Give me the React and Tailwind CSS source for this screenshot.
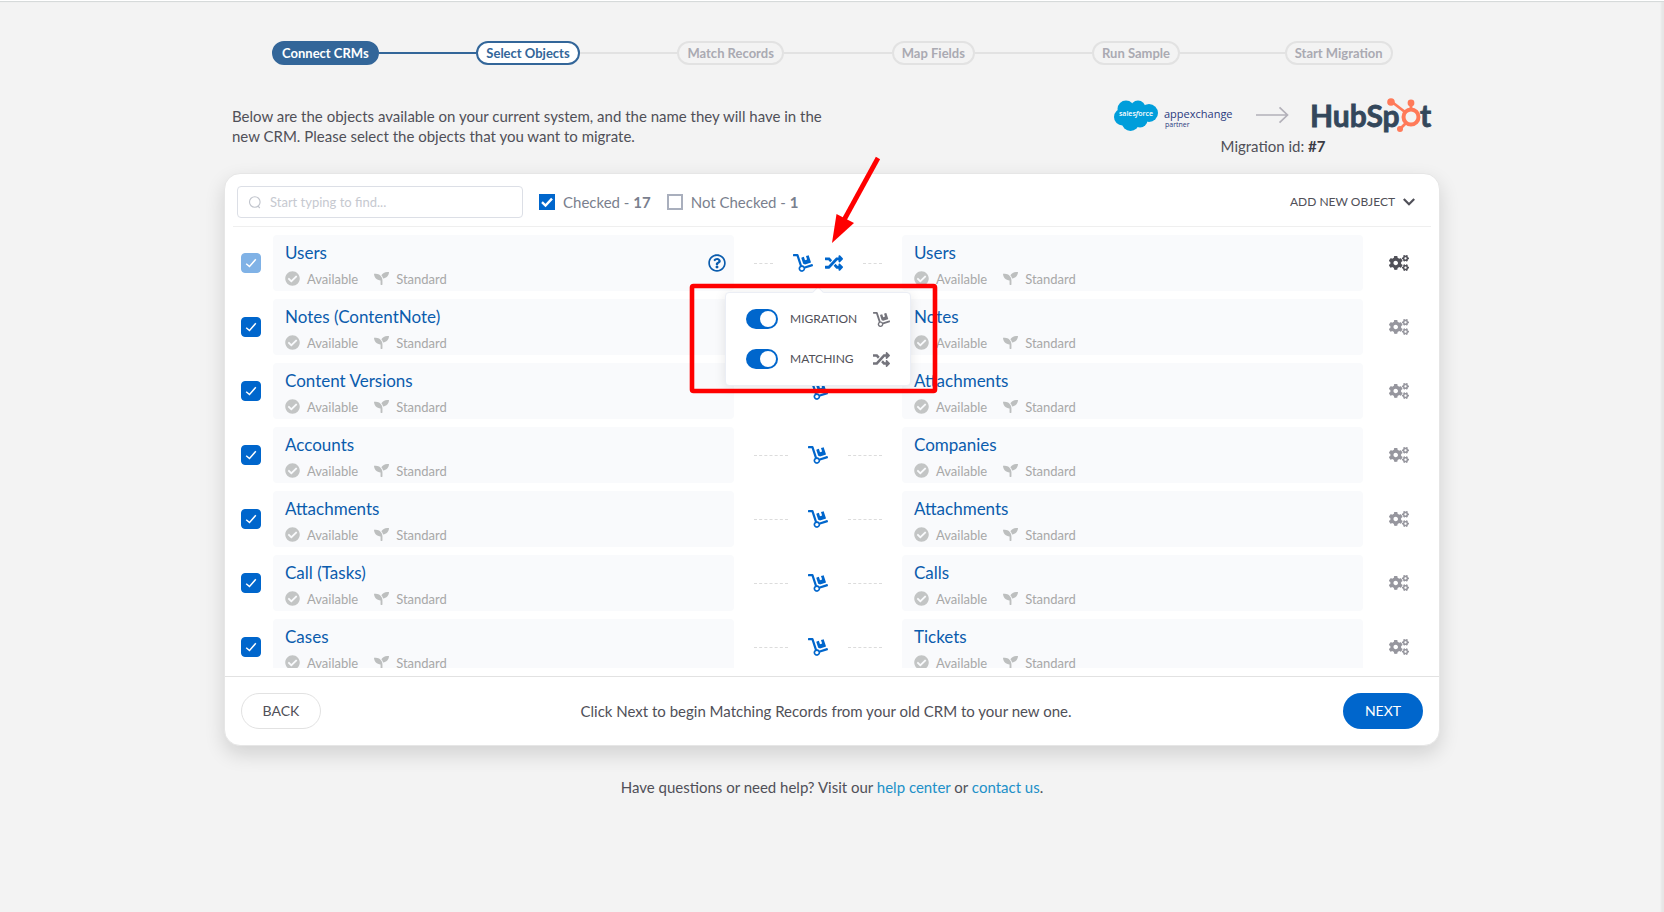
import { useState } from "react";
import {
  FaRandom,
  FaSeedling,
  FaCheckCircle,
  FaCogs,
  FaRegQuestionCircle,
  FaDolly,
} from "react-icons/fa";

const STEPS = [
  { label: "Connect CRMs", state: "done" },
  { label: "Select Objects", state: "current" },
  { label: "Match Records", state: "todo" },
  { label: "Map Fields", state: "todo" },
  { label: "Run Sample", state: "todo" },
  { label: "Start Migration", state: "todo" },
];

const PILL = {
  done: "border-[#336699] bg-[#336699] text-white",
  current: "border-[#336699] bg-white text-[#336699]",
  todo: "border-[#e2e2e2] bg-[#f3f3f3] text-[#aaaab2]",
};

const ROWS = [
  { source: "Users", target: "Users", locked: true, help: true, matching: true },
  { source: "Notes (ContentNote)", target: "Notes" },
  { source: "Content Versions", target: "Attachments" },
  { source: "Accounts", target: "Companies" },
  { source: "Attachments", target: "Attachments" },
  { source: "Call (Tasks)", target: "Calls" },
  { source: "Cases", target: "Tickets" },
];

function Stepper() {
  return (
    <ol className="grid grid-cols-6">
      {STEPS.map((step, i) => (
        <li key={step.label} className="flex items-center">
          <span
            className={`h-0.5 flex-1 ${
              i === 0 ? "bg-transparent" : i === 1 ? "bg-[#336699]" : "bg-[#e2e2e2]"
            }`}
          />
          <span
            className={`flex h-6 items-center rounded-full border-2 px-2 text-[13px] leading-5 font-bold ${PILL[step.state]}`}
          >
            {step.label}
          </span>
          <span
            className={`h-0.5 flex-1 ${
              i === STEPS.length - 1
                ? "bg-transparent"
                : i === 0
                  ? "bg-[#336699]"
                  : "bg-[#e2e2e2]"
            }`}
          />
        </li>
      ))}
    </ol>
  );
}

function SalesforceLogo() {
  return (
    <svg width="120" height="36" viewBox="0 0 120 36" role="img" aria-label="Salesforce AppExchange partner">
      <g fill="#009edb">
        <circle cx="12" cy="12" r="8.5" />
        <circle cx="24" cy="11" r="7.5" />
        <circle cx="35" cy="16" r="9" />
        <circle cx="8.5" cy="20" r="8.5" />
        <circle cx="16.5" cy="25.5" r="8.5" />
        <circle cx="26" cy="23" r="7.5" />
        <rect x="8" y="11" width="28" height="13" />
      </g>
      <text x="22" y="19" textAnchor="middle" fontFamily="Open Sans, sans-serif" fontSize="7" fontWeight="600" fill="#fff">
        sales<tspan fontStyle="italic">f</tspan>orce
      </text>
      <text x="50" y="21" fontFamily="Open Sans, sans-serif" fontSize="11" fontWeight="500" fill="#2a3a80">
        appexchange
      </text>
      <text x="51" y="30" fontFamily="Open Sans, sans-serif" fontSize="7" fontWeight="500" fill="#2a3a80">
        partner
      </text>
    </svg>
  );
}

function HubSpotLogo() {
  return (
    <svg width="121" height="36" viewBox="0 0 121 36" role="img" aria-label="HubSpot">
      <g fontFamily="Lato, sans-serif" fontSize="30" fontWeight="700" stroke="#33475b" strokeWidth=".8" fill="#33475b">
        <text x="-1" y="30">HubSp</text>
        <text x="109" y="30">t</text>
      </g>
      <g fill="none" stroke="#ff7a59">
        <circle cx="100" cy="20" r="7.500" strokeWidth="4" />
        <path d="M100 7v6M81 5l13 10M95 26l-5 5" strokeWidth="2.800" />
      </g>
      <g fill="#ff7a59">
        <circle cx="80" cy="5" r="3.800" />
        <circle cx="100" cy="6" r="3.400" />
        <circle cx="89" cy="32" r="3" />
      </g>
    </svg>
  );
}

function RowCheckbox({ label, locked }) {
  return (
    <span className="grid w-10 shrink-0 place-items-center pr-1">
      <input
        type="checkbox"
        aria-label={label}
        defaultChecked
        disabled={locked}
        className="peer col-start-1 row-start-1 size-5 appearance-none rounded-[4px] border border-[#9aa0ac] checked:border-[#0066cc] checked:bg-[#0066cc] disabled:border-[#80b2e6] disabled:bg-[#80b2e6]"
      />
      <svg
        viewBox="0 0 20 20"
        className="pointer-events-none invisible col-start-1 row-start-1 size-5 peer-checked:visible"
        fill="none"
        stroke="#fff"
        strokeWidth="1.500"
      >
        <path d="M5.200 10.700 8.500 13.500 14.800 6.300" />
      </svg>
    </span>
  );
}

function FilterCheckbox({ label, count, checked }) {
  return (
    <label className="flex items-center gap-2 text-[15px] leading-5 text-[#7a7f8e]">
      <span className="grid">
        <input
          type="checkbox"
          defaultChecked={checked}
          className="peer col-start-1 row-start-1 size-4 appearance-none border-2 border-[#a9afbd] bg-white checked:border-[#0066cc] checked:bg-[#0066cc]"
        />
        <svg
          viewBox="0 0 16 16"
          className="pointer-events-none invisible col-start-1 row-start-1 size-4 peer-checked:visible"
          fill="none"
          stroke="#fff"
          strokeWidth="2.400"
        >
          <path d="M3 8.200 6.500 11.500 13 4.600" />
        </svg>
      </span>
      <span>
        {label} - <b>{count}</b>
      </span>
    </label>
  );
}

function ObjectBox({ name, help }) {
  return (
    <div className="flex h-14 min-w-0 flex-1 items-center justify-between rounded-[4px] bg-[#f9fafc] pr-2 pl-3">
      <div className="flex flex-col gap-1 pt-[3px]">
        <span className="text-[17px] leading-6 text-[#0b5cad]">{name}</span>
        <span className="flex items-center gap-4 text-[13px] leading-5 text-[#a8a8a8]">
          <span className="flex items-center gap-[7px]">
            <FaCheckCircle className="size-[15px] text-[#c3c5c5]" />
            Available
          </span>
          <span className="flex items-center gap-[7px]">
            <FaSeedling className="size-[15px] text-[#bdbfbf]" />
            Standard
          </span>
        </span>
      </div>
      {help && (
        <button type="button" aria-label={`About ${name}`} className="text-[#0b5cad]">
          <FaRegQuestionCircle className="size-[18px]" />
        </button>
      )}
    </div>
  );
}

function Toggle({ label, icon: Icon }) {
  return (
    <label className="flex items-center gap-3 text-[12px] leading-5 text-[#505058]">
      <span className="grid items-center">
        <input
          type="checkbox"
          role="switch"
          defaultChecked
          className="peer col-start-1 row-start-1 h-5 w-8 appearance-none rounded-full bg-[#b9bdc5] checked:bg-[#0066cc]"
        />
        <span className="pointer-events-none col-start-1 row-start-1 ml-0.5 size-4 rounded-full bg-white peer-checked:ml-3.5" />
      </span>
      <span className="flex-1">{label}</span>
      <Icon className="size-[17px] shrink-0 text-[#74747c]" />
    </label>
  );
}

function ModePopover() {
  return (
    <div className="absolute top-[57px] left-1/2 z-10 -ml-[93px] flex w-[186px] flex-col gap-5 rounded-[4px] border border-[#ebeef5] bg-white px-5 py-4 shadow-[0_2px_12px_rgba(0,0,0,0.1)]">
      <span className="absolute -top-[5px] left-1/2 -ml-1 size-2 rotate-45 border-t border-l border-[#ebeef5] bg-white" />
      <Toggle label="MIGRATION" icon={FaDolly} />
      <Toggle label="MATCHING" icon={FaRandom} />
    </div>
  );
}

function ObjectRow({ row }) {
  return (
    <li className="flex items-center">
      <RowCheckbox label={row.source} locked={row.locked} />
      <ObjectBox name={row.source} help={row.help} />
      <div className="relative flex h-14 w-[168px] shrink-0 items-center gap-5 px-5">
        <span className="flex-1 border-t border-dashed border-[#dcdcdc]" />
        <span className="flex items-center gap-3 text-[#0066cc]">
          <FaDolly className="size-5" />
          {row.matching && <FaRandom className="size-[18px]" />}
        </span>
        <span className="flex-1 border-t border-dashed border-[#dcdcdc]" />
        {row.matching && <ModePopover />}
      </div>
      <ObjectBox name={row.target} />
      <div className="flex w-[68px] shrink-0 justify-center pl-1">
        <button
          type="button"
          aria-label={`Settings for ${row.target}`}
          className={row.locked ? "text-[#505058]" : "text-[#96969e]"}
        >
          <FaCogs className="size-5" />
        </button>
      </div>
    </li>
  );
}

function Callout() {
  return (
    <svg
      className="pointer-events-none absolute -top-5 left-1/2 z-20 -ml-36"
      width="252"
      height="242"
      viewBox="0 0 252 242"
      fill="none"
      aria-hidden="true"
    >
      <rect x="4" y="132" width="243" height="105" rx="1.500" stroke="#ff0000" strokeWidth="4.600" />
      <path d="M190 4 156 66" stroke="#ff0000" strokeWidth="4.800" />
      <path d="M144 89 148.500 60 166 69Z" fill="#ff0000" />
    </svg>
  );
}

export default function App() {
  const [query, setQuery] = useState("");
  const rows = ROWS.filter((r) =>
    `${r.source} ${r.target}`.toLowerCase().includes(query.toLowerCase())
  );

  return (
    <div className="min-h-screen border-t border-white bg-[#f3f3f3] font-[Lato,sans-serif] text-[15px] leading-5 text-[#505058] shadow-[inset_-3px_1px_2px_rgba(0,0,0,0.05)]">
      <div className="border-t border-[#d6dada] px-6 pt-[39px] pb-10">
        <div className="mx-auto max-w-[1216px]">
          <Stepper />

          <header className="mt-8 flex items-start justify-between px-2">
            <p className="max-w-[600px] pt-[9px]">
              Below are the objects available on your current system, and the name they will
              have in the new CRM. Please select the objects that you want to migrate.
            </p>
            <div className="flex flex-col items-center gap-[3px]">
              <div className="flex items-center">
                <SalesforceLogo />
                <svg width="34" height="18" viewBox="0 0 34 18" className="mr-[21px] ml-[22px]" fill="none" stroke="#b3b1b9" strokeWidth="1.700" aria-hidden="true">
                  <path d="M0 9h31M23.500 1.300 31.500 9l-8 7.700" />
                </svg>
                <HubSpotLogo />
              </div>
              <p>
                Migration id: <b className="text-[#3c3c44]">#7</b>
              </p>
            </div>
          </header>

          <main className="relative mt-[17px] rounded-2xl border border-[#e6e6e6] bg-white shadow-[0_8px_20px_rgba(0,0,0,0.14)]">
            <div className="px-2">
              <div className="flex items-center gap-4 border-b border-[#efefef] pt-3 pr-4 pb-2 pl-1">
                <label className="flex h-8 w-[286px] items-center gap-2 rounded-[4px] border border-[#dcdfe6] px-2.5">
                  <svg viewBox="0 0 14 14" className="size-3.5 shrink-0" fill="none" stroke="#c0c4cc" strokeWidth="1.100" aria-hidden="true">
                    <circle cx="6.800" cy="7" r="5.300" />
                    <path d="M10 11.200 11.800 13" />
                  </svg>
                  <input
                    type="search"
                    aria-label="Find an object"
                    value={query}
                    onChange={(e) => setQuery(e.target.value)}
                    placeholder="Start typing to find..."
                    className="min-w-0 flex-1 text-[13px] leading-5 outline-none placeholder:text-[#c6c9d0]"
                  />
                </label>
                <FilterCheckbox label="Checked" count={17} checked />
                <FilterCheckbox label="Not Checked" count={1} />
                <button type="button" className="ml-auto flex items-center gap-2 text-[12px] leading-5">
                  ADD NEW OBJECT
                  <svg viewBox="0 0 12 8" className="h-2 w-3" fill="none" stroke="#505058" strokeWidth="2.200" aria-hidden="true">
                    <path d="M.8 1 6 6.200 11.200 1" />
                  </svg>
                </button>
              </div>

              <ul className="my-2 flex h-[433px] flex-col gap-2 overflow-y-auto [scrollbar-width:none]">
                {rows.map((row) => (
                  <ObjectRow key={row.source} row={row} />
                ))}
              </ul>
            </div>

            <footer className="flex items-center justify-between border-t border-[#e2e2e2] px-4 py-4">
              <button type="button" className="h-9 w-20 rounded-full border border-[#e2e2e2] bg-white text-[14px]">
                BACK
              </button>
              <p className="pr-3">Click Next to begin Matching Records from your old CRM to your new one.</p>
              <button type="button" className="h-9 w-20 rounded-full bg-[#0066cc] text-[14px] text-white">
                NEXT
              </button>
            </footer>
            <Callout />
          </main>

          <p className="mt-[31px] text-center">
            Have questions or need help? Visit our{" "}
            <a href="#help" className="text-[#2190c8]">help center</a> or{" "}
            <a href="#contact" className="text-[#2190c8]">contact us</a>.
          </p>
        </div>
      </div>
    </div>
  );
}
